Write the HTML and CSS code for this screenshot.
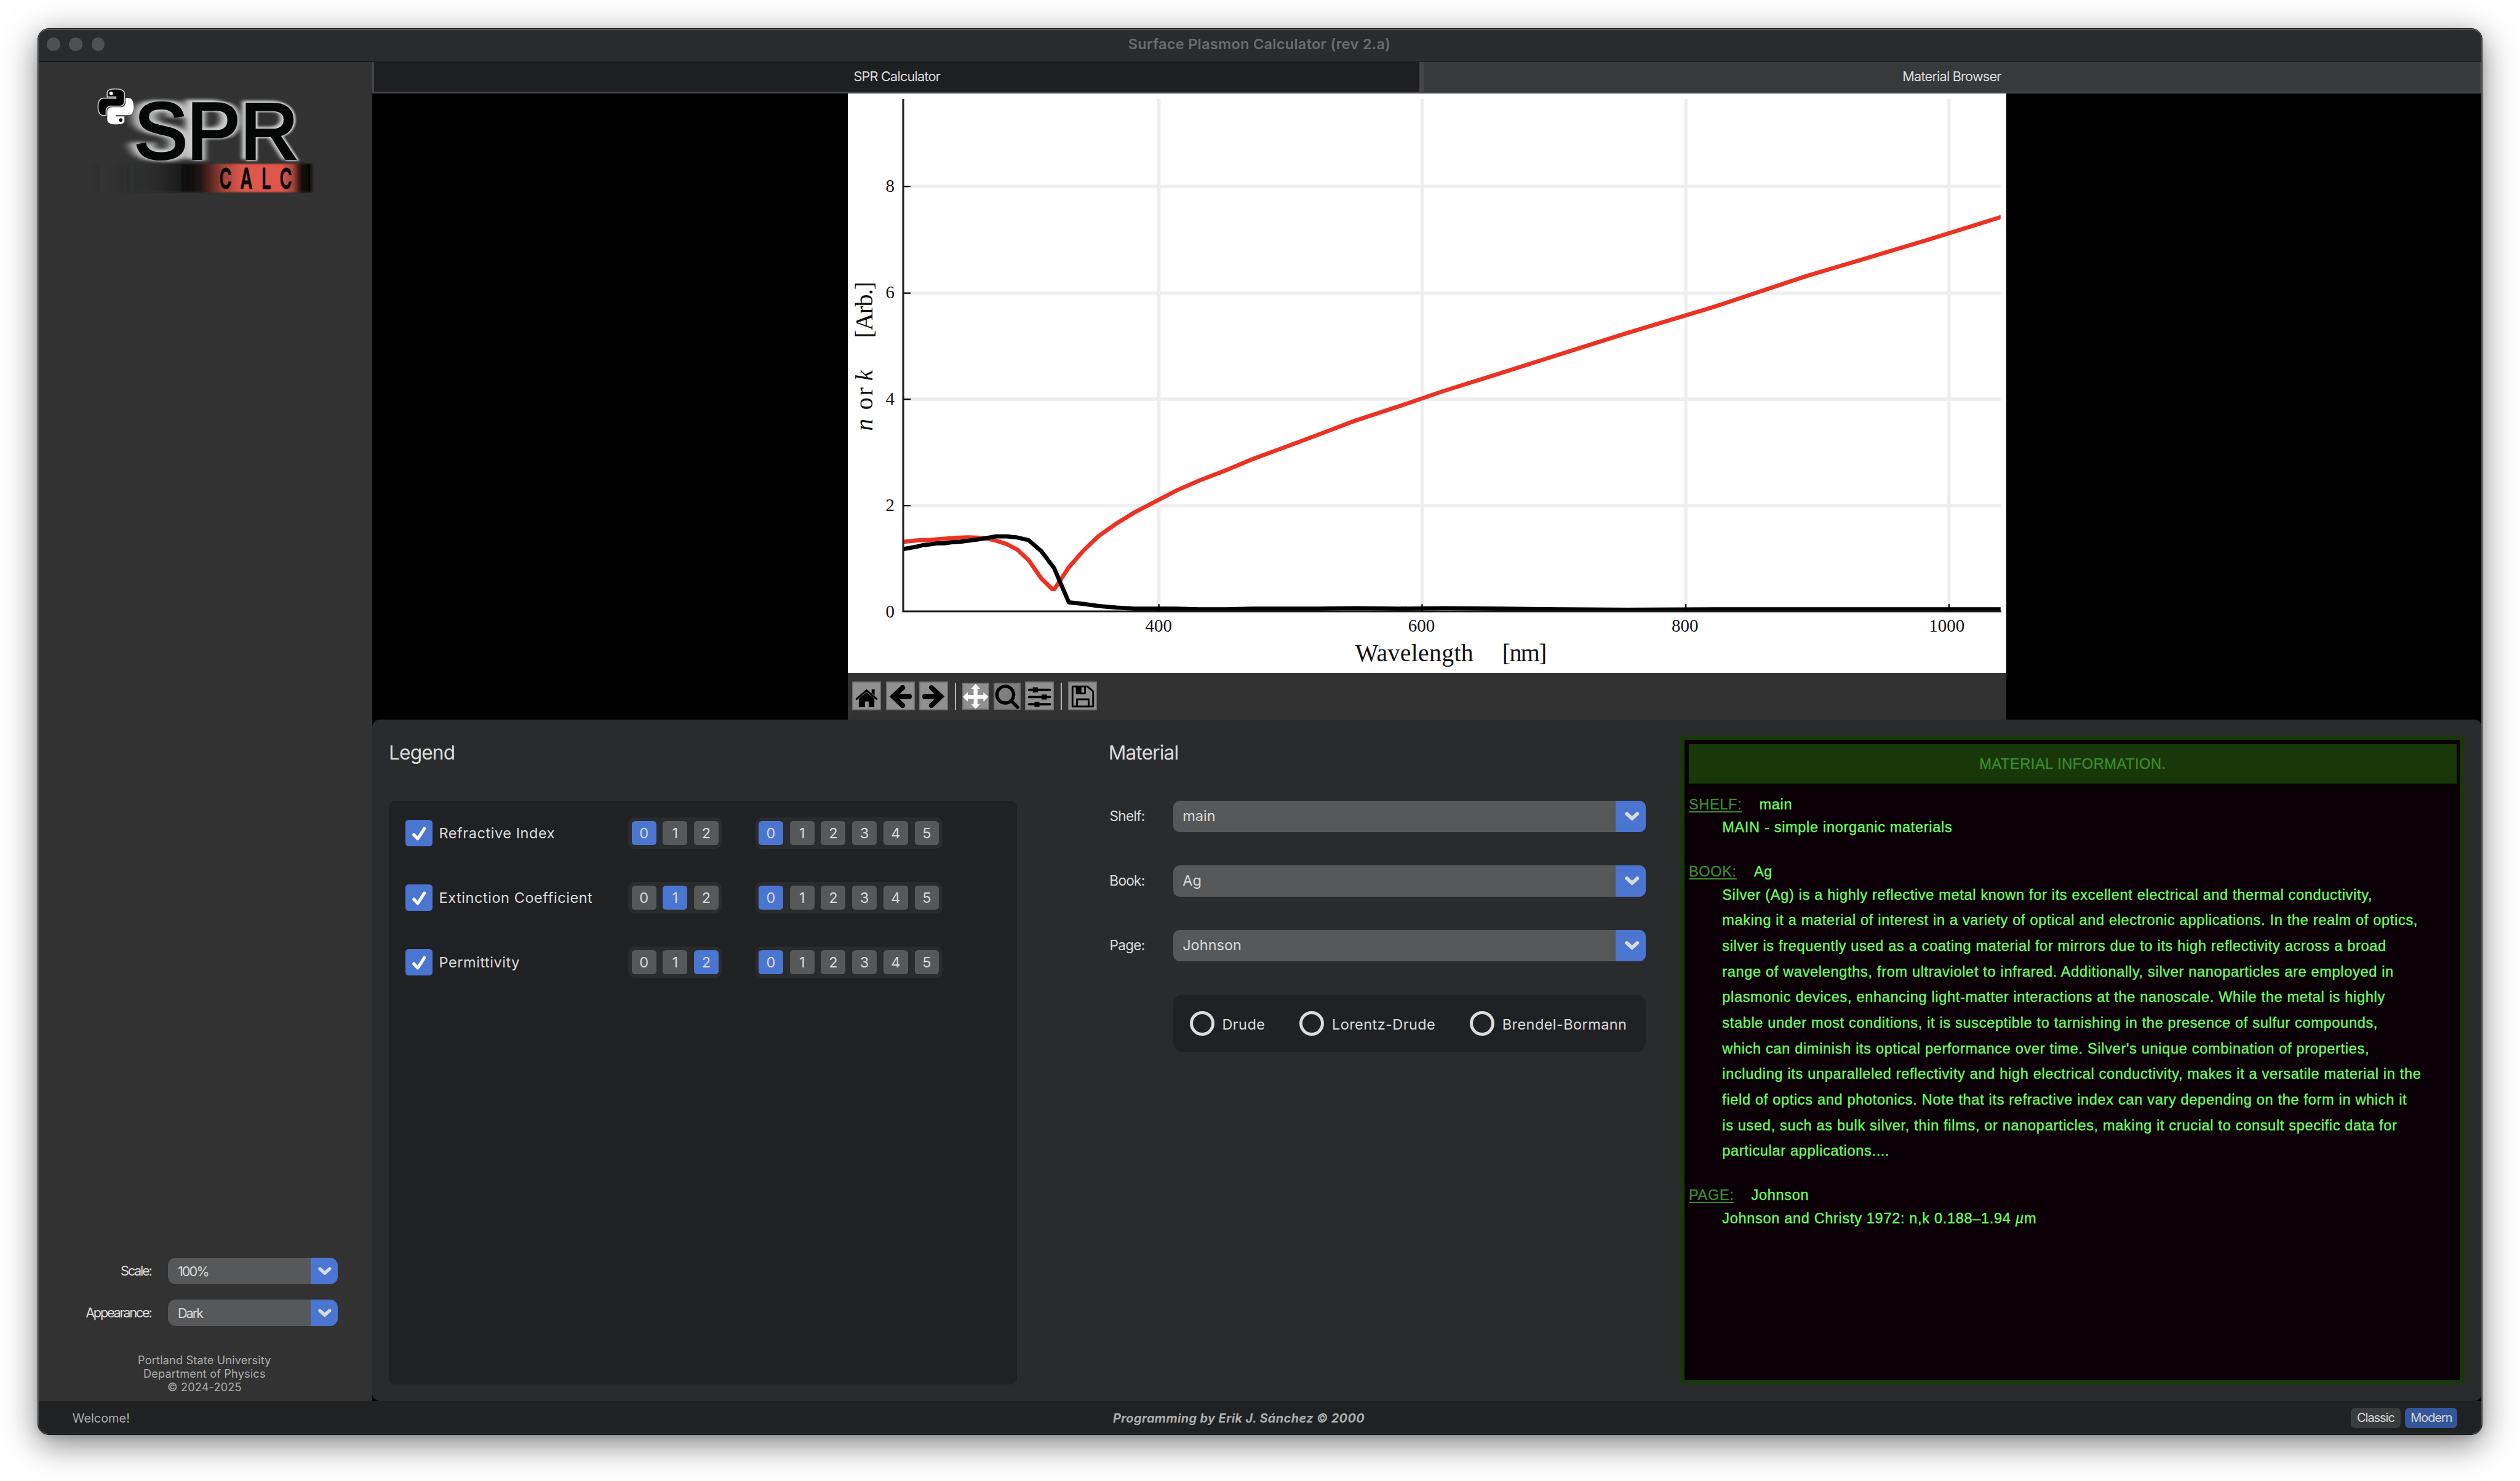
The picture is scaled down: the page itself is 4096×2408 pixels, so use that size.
FILE: index.html
```html
<!DOCTYPE html>
<html lang="en">
<head>
<meta charset="utf-8">
<title>Surface Plasmon Calculator</title>
<link rel="stylesheet" href="styles.css">
</head>
<body>
<svg width="0" height="0" class="defs">
  <defs>
    <symbol id="check" viewBox="0 0 48 48"><path d="M15 26.500l7 7.500L34 15.500" fill="none" stroke="#fff" stroke-width="5.500" stroke-linecap="round" stroke-linejoin="round"/></symbol>
    <symbol id="chevron" viewBox="0 0 26 16"><path d="M3.500 3.500l9.500 8.500 9.500-8.500" fill="none" stroke="#dadada" stroke-width="6.500" stroke-linecap="round" stroke-linejoin="miter"/></symbol>
  </defs>
</svg>
<div class="window">
  <header class="titlebar">
    <div class="lights"><i></i><i></i><i></i></div>
    <div class="title">Surface Plasmon Calculator (rev 2.a)</div>
  </header>

  <div class="content">
    <aside class="sidebar">
      <svg class="logo" viewBox="0 0 420 210">
        <defs>
          <linearGradient id="bar" x1="0" x2="1" y1="0" y2="0">
            <stop offset="0" stop-color="#323232" stop-opacity="0"/>
            <stop offset=".3" stop-color="#1e2020" stop-opacity=".5"/>
            <stop offset=".44" stop-color="#101010"/>
            <stop offset=".49" stop-color="#1e1312"/>
            <stop offset=".6" stop-color="#a8453b"/>
            <stop offset=".68" stop-color="#df574b"/>
            <stop offset=".85" stop-color="#df574b"/>
            <stop offset=".9" stop-color="#a8453b"/>
            <stop offset=".94" stop-color="#150a09"/>
            <stop offset=".975" stop-color="#050505"/>
            <stop offset="1" stop-color="#323232" stop-opacity="0"/>
          </linearGradient>
          <filter id="trail-s" x="-40%" y="-20%" width="180%" height="140%">
            <feGaussianBlur stdDeviation="9 3"/><feOffset dx="-10" dy="-1" result="far"/>
            <feGaussianBlur in="SourceGraphic" stdDeviation="9 3"/><feOffset dx="12" dy="0" result="near"/>
            <feMerge><feMergeNode in="far"/><feMergeNode in="near"/></feMerge>
          </filter>
          <filter id="trail-p" x="-40%" y="-20%" width="180%" height="140%">
            <feGaussianBlur stdDeviation="6 3"/><feOffset dx="-11" dy="-3" result="far"/>
            <feGaussianBlur in="SourceGraphic" stdDeviation="5 2"/><feOffset dx="4" result="near"/>
            <feMerge><feMergeNode in="far"/><feMergeNode in="near"/></feMerge>
          </filter>
          <filter id="trail-r" x="-40%" y="-20%" width="180%" height="140%">
            <feGaussianBlur stdDeviation="3.500 2.500"/><feOffset dx="-5" dy="-2" result="far"/>
            <feGaussianBlur in="SourceGraphic" stdDeviation="2"/><feOffset dx="2" result="near"/>
            <feMerge><feMergeNode in="far"/><feMergeNode in="near"/></feMerge>
          </filter>
          <filter id="edge" x="-5%" y="-20%" width="110%" height="140%"><feGaussianBlur stdDeviation="1.200"/></filter>
        </defs>
        <g class="glow">
          <text x="80.600" y="144.500" filter="url(#trail-s)">S</text>
          <text x="175.400" y="144.500" filter="url(#trail-p)">P</text>
          <text x="271.400" y="144.500" filter="url(#trail-r)">R</text>
        </g>
        <rect x="0" y="154" width="406" height="51" fill="url(#bar)" filter="url(#edge)"/>
        <g class="spr">
          <text x="80.600" y="144.500">S</text>
          <text x="175.400" y="144.500">P</text>
          <text x="271.400" y="144.500">R</text>
        </g>
        <g class="calc">
          <text transform="translate(244.700 199) scale(.58 1)">C</text>
          <text transform="translate(282 199) scale(.58 1)">A</text>
          <text transform="translate(318 199) scale(.58 1)">L</text>
          <text transform="translate(353 199) scale(.58 1)">C</text>
        </g>
        <g transform="translate(16 19.500) scale(2.650)">
          <path fill="#050505" stroke="#c8c8c8" stroke-width=".7" d="M14.25.18l.9.2.73.26.59.3.45.32.34.34.25.34.16.33.1.3.04.26.02.2-.01.13V8.5l-.05.63-.13.55-.21.46-.26.38-.3.31-.33.25-.35.19-.35.14-.33.1-.3.07-.26.04-.21.02H8.77l-.69.05-.59.14-.5.22-.41.27-.33.32-.27.35-.2.36-.15.37-.1.35-.07.32-.04.27-.02.21v3.06H3.17l-.21-.03-.28-.07-.32-.12-.35-.18-.36-.26-.36-.36-.35-.46-.32-.59-.28-.73-.21-.88-.14-1.05-.05-1.23.06-1.22.16-1.04.24-.87.32-.71.36-.57.4-.44.42-.33.42-.24.4-.16.36-.1.32-.05.24-.01h.16l.06.01h8.16v-.83H6.180l-.01-2.750-.02-.37.05-.34.11-.31.17-.28.25-.26.31-.23.38-.2.44-.18.51-.15.58-.12.64-.1.71-.06.77-.04.84-.02 1.27.05z"/>
          <circle cx="8.800" cy="3" r="1.200" fill="#fff"/>
          <path fill="#fff" d="M21.040 6.110l.28.06.32.12.35.18.36.27.36.35.35.47.32.59.28.73.21.88.14 1.04.05 1.23-.06 1.23-.16 1.04-.24.86-.32.71-.36.57-.4.45-.42.33-.42.24-.4.16-.36.09-.32.05-.24.02-.16-.01h-8.22v.82h5.840l.01 2.76.02.36-.05.34-.11.31-.17.29-.25.25-.31.24-.38.2-.44.17-.51.15-.58.13-.64.09-.71.07-.77.04-.84.01-1.27-.04-1.07-.14-.9-.2-.73-.25-.59-.3-.45-.33-.34-.34-.25-.34-.16-.33-.1-.3-.04-.25-.02-.2.01-.13v-5.340l.05-.64.13-.54.21-.46.26-.38.3-.32.33-.24.35-.2.35-.14.33-.1.3-.06.26-.04.21-.02.13-.01h5.840l.69-.05.59-.14.5-.21.41-.28.33-.32.27-.35.2-.36.15-.36.1-.35.07-.32.04-.28.02-.21V6.070h2.090l.14.01z"/>
          <circle cx="15.300" cy="21" r="1.200" fill="#050505"/>
        </g>
      </svg>

      <div class="settings">
        <label>Scale:</label>
        <div class="combo small"><span class="value">100%</span><span class="arrow"><svg><use href="#chevron"/></svg></span></div>
        <label>Appearance:</label>
        <div class="combo small"><span class="value">Dark</span><span class="arrow"><svg><use href="#chevron"/></svg></span></div>
      </div>
      <p class="credits">Portland State University<br>Department of Physics<br>© 2024-2025</p>
    </aside>

    <main class="main">
      <nav class="tabs">
        <div class="tab active">SPR Calculator</div>
        <div class="tab">Material Browser</div>
      </nav>

      <section class="figure">
        <svg class="plot" viewBox="0 0 2080 1040">
          <defs>
            <clipPath id="axes"><rect x="205.600" y="-1" width="833.800" height="11"/></clipPath>
          </defs>
          <g class="grid">
            <path d="M558.500 10V930M1031 10V930M1504.500 10V930M1977 10V930"/>
            <path d="M100 740.200H2070M100 549H2070M100 358.500H2070M100 167H2070"/>
          </g>
          <g transform="matrix(2.363 0 0 -95.400 -386.500 930)">
            <polyline class="series red" clip-path="url(#axes)" points="203.300,1.296 207.300,1.312 211.900,1.325 216.400,1.336 221.400,1.342 226.200,1.344 231.300,1.357 237.100,1.367 242.600,1.378 249,1.389 255.100,1.393 261.600,1.387 268.900,1.372 276.100,1.331 284.400,1.264 292.400,1.161 300.900,.964 310.700,.616 318.800,.420 320.600,.420 331.500,.829 342.500,1.142 354.200,1.419 367.900,1.657 381.500,1.864 397.400,2.070 413.300,2.275 430.500,2.462 450.900,2.657 471.400,2.869 495.900,3.093 520.900,3.324 548.600,3.586 582.100,3.858 616.800,4.152 659.500,4.483 704.500,4.838 756,5.242 821.100,5.727 892,6.312 984,6.992 1088,7.795"/>
            <polyline class="series" clip-path="url(#axes)" points="203.300,1.150 207.300,1.180 211.900,1.200 216.400,1.220 221.400,1.250 226.200,1.260 231.300,1.280 237.100,1.280 242.600,1.300 249,1.310 255.100,1.330 261.600,1.350 268.900,1.380 276.100,1.410 284.400,1.410 292.400,1.390 300.900,1.340 310.700,1.130 320.400,.810 331.500,.170 342.500,.140 354.200,.100 367.900,.070 381.500,.050 397.400,.050 413.300,.050 430.500,.040 450.900,.040 471.400,.050 495.900,.050 520.900,.050 548.600,.060 582.100,.050 616.800,.060 659.500,.050 704.500,.040 756,.030 821.100,.040 892,.040 984,.040 1088,.040"/>
          </g>
          <path class="axis" d="M99.500 10V930H2071"/>
          <path class="ticks" d="M100 740.200H113M100 549H113M100 358.500H113M100 167H113M558.500 930V917M1031 930V917M1504.500 930V917M1977 930V917"/>
          <g class="tick-label">
            <text x="84" y="941" text-anchor="end">0</text>
            <text x="84" y="750" text-anchor="end">2</text>
            <text x="84" y="559" text-anchor="end">4</text>
            <text x="84" y="368" text-anchor="end">6</text>
            <text x="84" y="177" text-anchor="end">8</text>
            <text x="558" y="966" text-anchor="middle">400</text>
            <text x="1030" y="966" text-anchor="middle">600</text>
            <text x="1503" y="966" text-anchor="middle">800</text>
            <text x="1973" y="966" text-anchor="middle">1000</text>
          </g>
          <g class="axis-label">
            <text x="911" y="1020" textLength="212">Wavelength</text>
            <text x="1175" y="1020" textLength="80">[nm]</text>
            <g transform="translate(44 606) rotate(-90)">
              <text x="0" y="0" font-style="italic">n</text>
              <text x="38" y="0" textLength="40">or</text>
              <text x="90" y="0" font-style="italic">k</text>
              <text x="167" y="0" textLength="101">[Arb.]</text>
            </g>
          </g>
        </svg>
        <div class="toolbar">
          <svg class="tool" viewBox="0 0 52 52"><path d="M8 31.500L26 16l18 15.500" fill="none" stroke="#000" stroke-width="3.500" stroke-linecap="round"/><path d="M35 14h5.500v11L35 20zM12 31l14-11.500L40 31v15H30V36h-7v10H12z"/></svg>
          <svg class="tool" viewBox="0 0 52 52"><path d="M30 11L13 27l17 16M13 27h29" fill="none" stroke="#000" stroke-width="9" stroke-linecap="round" stroke-linejoin="miter"/></svg>
          <svg class="tool" viewBox="0 0 52 52"><path d="M22 11l17 16-17 16M39 27H10" fill="none" stroke="#000" stroke-width="9" stroke-linecap="round" stroke-linejoin="miter"/></svg>
          <i class="sep"></i>
          <svg class="tool compact" viewBox="0 0 48 48"><path fill="#fff" d="M24 2l8 9h-4.500v11H38v-5l9 8.500-9 8.500v-5H27.500v10H32l-8 8-8-8h4.500V29H10v5l-9-8.500 9-8.500v5h10.500V11H16z"/></svg>
          <svg class="tool compact dim" viewBox="0 0 48 48"><circle cx="21" cy="21.500" r="15" fill="none" stroke="#000" stroke-width="6"/><path d="M32 33l11 11" stroke="#000" stroke-width="6" stroke-linecap="round"/></svg>
          <svg class="tool" viewBox="0 0 52 52"><path d="M7 15h38M7 28h38M7 41h38" stroke="#000" stroke-width="4" stroke-linecap="round"/><path d="M14 10.500h9v9h-9zM30 23.500h9v9h-9zM17 36.500h9v9h-9z"/></svg>
          <i class="sep"></i>
          <svg class="tool" viewBox="0 0 52 52"><path d="M8 9h27l10 9v27H8zM16 45V32h21v13" fill="none" stroke="#000" stroke-width="3.200" stroke-linejoin="round"/><path d="M14 10v11a2 2 0 0 0 2 2h14a2 2 0 0 0 2-2V10h-3v10h-5V10z"/></svg>
        </div>
      </section>

      <section class="controls">
        <div class="legend">
          <h2>Legend</h2>
          <div class="legend-card">
            <div class="legend-row">
              <svg class="checkbox"><use href="#check"/></svg><span class="name">Refractive Index</span>
              <div class="segments"><b class="on">0</b><b>1</b><b>2</b></div>
              <div class="segments"><b class="on">0</b><b>1</b><b>2</b><b>3</b><b>4</b><b>5</b></div>
            </div>
            <div class="legend-row">
              <svg class="checkbox"><use href="#check"/></svg><span class="name">Extinction Coefficient</span>
              <div class="segments"><b>0</b><b class="on">1</b><b>2</b></div>
              <div class="segments"><b class="on">0</b><b>1</b><b>2</b><b>3</b><b>4</b><b>5</b></div>
            </div>
            <div class="legend-row">
              <svg class="checkbox"><use href="#check"/></svg><span class="name">Permittivity</span>
              <div class="segments"><b>0</b><b>1</b><b class="on">2</b></div>
              <div class="segments"><b class="on">0</b><b>1</b><b>2</b><b>3</b><b>4</b><b>5</b></div>
            </div>
          </div>
        </div>

        <div class="material">
          <h2>Material</h2>
          <div class="fields">
            <label>Shelf:</label>
            <div class="combo"><span class="value">main</span><span class="arrow"><svg><use href="#chevron"/></svg></span></div>
            <label>Book:</label>
            <div class="combo"><span class="value">Ag</span><span class="arrow"><svg><use href="#chevron"/></svg></span></div>
            <label>Page:</label>
            <div class="combo"><span class="value">Johnson</span><span class="arrow"><svg><use href="#chevron"/></svg></span></div>
            <div class="radios">
              <span class="radio"><i></i><span>Drude</span></span>
              <span class="radio"><i></i><span>Lorentz-Drude</span></span>
              <span class="radio"><i></i><span>Brendel-Bormann</span></span>
            </div>
          </div>
        </div>

        <div class="info">
          <h3>MATERIAL INFORMATION.</h3>
          <div class="entry"><u>SHELF:</u><span>main</span></div>
          <p class="short">MAIN - simple inorganic materials</p>
          <div class="entry"><u>BOOK:</u><span>Ag</span></div>
          <p class="long">Silver (Ag) is a highly reflective metal known for its excellent electrical and thermal conductivity,<br>making it a material of interest in a variety of optical and electronic applications. In the realm of optics,<br>silver is frequently used as a coating material for mirrors due to its high reflectivity across a broad<br>range of wavelengths, from ultraviolet to infrared. Additionally, silver nanoparticles are employed in<br>plasmonic devices, enhancing light-matter interactions at the nanoscale. While the metal is highly<br>stable under most conditions, it is susceptible to tarnishing in the presence of sulfur compounds,<br>which can diminish its optical performance over time. Silver's unique combination of properties,<br>including its unparalleled reflectivity and high electrical conductivity, makes it a versatile material in the<br>field of optics and photonics. Note that its refractive index can vary depending on the form in which it<br>is used, such as bulk silver, thin films, or nanoparticles, making it crucial to consult specific data for<br>particular applications....</p>
          <div class="entry"><u>PAGE:</u><span>Johnson</span></div>
          <p class="short">Johnson and Christy 1972: n,k 0.188–1.94 <em>µ</em>m</p>
        </div>
      </section>
    </main>
  </div>

  <footer class="statusbar">
    <div class="status">Welcome!</div>
    <div class="author">Programming by Erik J. Sánchez © 2000</div>
    <div class="modes"><span class="mode">Classic</span><span class="mode on">Modern</span></div>
  </footer>
</div>
</body>
</html>
```
FILE: styles.css
```css
/* 0.01rem is one design pixel */
html { font-size: 90.539px; }
* { box-sizing: border-box; margin: 0; padding: 0; }
body {
  width: 100vw; height: 100vh; overflow: hidden; background: #fff;
  padding: .51rem 0 0 .67rem;
  font-family: Inter, "Liberation Sans", sans-serif; color: #dcdcdc;
}
.defs { display: block; width: 0; height: 0; position: absolute; }
.window {
  position: relative; display: flex; flex-direction: column;
  width: 43.9rem; height: 25.26rem; overflow: visible;
  border: .01rem solid #0c0c0c; border-radius: .2rem; background: #202123;
  box-shadow: 0 .16rem .6rem rgba(0, 0, 0, .5), 0 .04rem .12rem rgba(0, 0, 0, .1);
}
.window::after {
  content: ""; position: absolute; inset: 0; border-radius: .19rem;
  border: .02rem solid #535456; border-top-color: #77797a; pointer-events: none;
}
.titlebar {
  position: relative; height: .58rem; flex: none; background: #2a2b2d;
  border-bottom: .015rem solid #000; border-radius: .19rem .19rem 0 0;
  display: flex; align-items: center; padding: 0 .16rem .02rem;
}
.lights { display: flex; gap: .16rem; width: 3rem; }
.lights i { width: .24rem; height: .24rem; border-radius: 50%; background: #4f5052; }
.title { flex: 1; text-align: center; margin-right: 3.02rem; font-size: .26rem; line-height: .3rem; font-weight: 600; color: #6b6c6d; padding-bottom: .02rem; letter-spacing: .003rem; }

.content { display: flex; height: 24.06rem; flex: none; }
.sidebar { width: 6rem; flex: none; background: #323232; display: flex; flex-direction: column; padding: .3rem 0 0 .92rem; }
.logo { width: 4.2rem; height: 2.1rem; display: block; overflow: visible; }
.spr, .glow { font-family: "Liberation Sans", sans-serif; font-size: 144px; fill: #050706; stroke: #050706; stroke-width: 4.500px; }
.glow { fill: #cfcfcf; stroke: #cfcfcf; stroke-width: 7px; }
.calc { font-family: Inter, sans-serif; font-weight: 600; font-size: 52px; text-anchor: middle; fill: #050505; stroke: #050505; stroke-width: 1px; }
.settings {
  display: grid; grid-template-columns: 1.11rem 3.04rem; column-gap: .31rem; row-gap: .26rem;
  margin: auto 0 0 0; align-items: center; font-size: .24rem;
}
.settings label { display: flex; justify-content: flex-end; line-height: .48rem; padding-top: .01rem; white-space: nowrap; letter-spacing: -.025rem; }
.credits { width: 4.14rem; text-align: center; color: #adadad; font-size: .2rem; line-height: .24rem; margin: .49rem 0 .13rem; letter-spacing: .002rem; }

.combo { display: flex; height: .56rem; border-radius: .12rem; overflow: hidden; background: #575859; }
.combo .value { flex: 1; line-height: .56rem; padding-left: .17rem; font-size: .26rem; color: #dadada; }
.combo .arrow { width: .54rem; background: #4a76d2; display: flex; align-items: center; justify-content: center; }
.combo .arrow svg { width: .26rem; height: .16rem; margin-left: .06rem; }
.combo.small { height: .48rem; border-radius: .14rem; }
.combo.small .value { line-height: .49rem; font-size: .24rem; letter-spacing: -.022rem; }
.combo.small .arrow { width: .48rem; }
.combo.small .arrow svg { width: .24rem; height: .15rem; margin-left: .02rem; }

.main { flex: 1; display: flex; flex-direction: column; background: #000; }
.tabs { height: .58rem; display: flex; gap: .08rem; padding: .02rem .04rem .04rem; background: #464649; }
.tab { flex: 1; background: #38393b; text-align: center; font-size: .24rem; line-height: .52rem; letter-spacing: -.009rem; }
.tab.active { flex: none; width: 18.76rem; background: #1e1f21; }
.figure { height: 11.24rem; display: flex; flex-direction: column; align-items: center; }
.plot { width: 20.8rem; height: 10.4rem; background: #fff; display: block; }
.grid path { stroke: #eee; stroke-width: 6px; fill: none; }
.series { fill: none; stroke: #000; stroke-width: .075rem; stroke-linejoin: round; vector-effect: non-scaling-stroke; }
.series.red { stroke: #ec3323; }
.axis { fill: none; stroke: #1c1c1c; stroke-width: 3.500px; }
.ticks { stroke: #000; stroke-width: 2.500px; }
.tick-label { font: 32px "Liberation Serif", serif; fill: #111; }
.axis-label { font: 44px "Liberation Serif", serif; fill: #111; }
.toolbar { width: 20.8rem; height: .84rem; background: #323232; display: flex; align-items: center; gap: .08rem; padding-left: .08rem; }
.tool { width: .52rem; height: .52rem; background: #909090; box-shadow: inset 0 0 0 .02rem #6f6f6f; }
.tool.compact { width: .48rem; height: .48rem; }
.tool.dim { background: #7e7e7e; }
.sep { width: .02rem; height: .48rem; background: #b4b4b4; margin: 0 .04rem; }

.controls { height: 12.24rem; background: #2a2b2d; border-radius: .14rem; display: flex; padding: .29rem .32rem .3rem .3rem; }
h2 { font-weight: 400; font-size: .35rem; line-height: .5rem; margin: .05rem 0 .62rem; letter-spacing: -.0095rem; }
.legend { width: 11.28rem; display: flex; flex-direction: column; }
.legend-card { flex: 1; background: #202123; border-radius: .12rem; padding: .3rem; display: flex; flex-direction: column; gap: .6rem; }
.legend-row { display: flex; align-items: center; height: .56rem; }
.checkbox { width: .48rem; height: .48rem; border-radius: .06rem; background: #4a76d2; }
.name { width: 3.4rem; margin-left: .12rem; font-size: .26rem; letter-spacing: .006rem; }
.segments { display: flex; gap: .12rem; padding: .06rem; background: #2a2b2d; border-radius: .12rem; margin-right: .6rem; }
.segments b { width: .44rem; height: .44rem; border-radius: .06rem; background: #575859; font-weight: 400; font-size: .26rem; line-height: .44rem; text-align: center; color: #dadada; }
.segments .on { background: #4a76d2; }

.material { width: 9.64rem; margin-left: 1.64rem; }
.fields { display: grid; grid-template-columns: 1.16rem 8.48rem; row-gap: .6rem; font-size: .26rem; line-height: .56rem; }
.fields label { width: .65rem; display: flex; justify-content: flex-end; font-size: .25rem; white-space: nowrap; letter-spacing: -.008rem; }
.radios { grid-column: 2; height: 1.04rem; border-radius: .18rem; background: #202123; display: flex; align-items: center; padding-left: .3rem; gap: .62rem; letter-spacing: .0045rem; }
.radio { display: flex; align-items: center; gap: .14rem; }
.radio i { width: .44rem; height: .44rem; border: .06rem solid #dcdcdc; border-radius: 50%; }
.radio span { padding-top: .04rem; white-space: nowrap; }

.info {
  width: 14.08rem; margin-left: .62rem; background: #0a0006; border: .08rem solid #18380a; border-radius: .04rem;
  padding: .08rem .06rem 0 .08rem; font-family: "Liberation Sans", sans-serif; font-size: .26rem; letter-spacing: .0075rem; color: #6bff5c;
  -webkit-text-stroke: .004rem currentColor;
}
.info h3 { height: .7rem; line-height: .72rem; background: #18380a; color: #3b8d2b; font-weight: 400; font-size: .26rem; text-align: center; margin-bottom: .18rem; letter-spacing: .0065rem; }
.entry { display: flex; gap: .31rem; line-height: .41rem; height: .41rem; }
.entry u { color: #3b8d2b; text-underline-offset: .03rem; text-decoration-thickness: .02rem; }
.info p { padding-left: .6rem; white-space: nowrap; }
.short { line-height: .41rem; margin-bottom: .38rem; }
.long { line-height: .46rem; margin: -.01rem 0 .36rem; }

.statusbar { flex: 1; display: grid; grid-template-columns: 18.68rem auto 1fr; align-items: center; padding: .01rem .44rem 0 .62rem; font-size: .22rem; color: #adadad; }
.author { font-weight: 700; font-style: italic; letter-spacing: .0042rem; white-space: nowrap; }
.modes { display: flex; justify-content: flex-end; gap: .08rem; letter-spacing: -.011rem; }
.mode { width: .9rem; height: .36rem; line-height: .36rem; border-radius: .08rem; background: #3b3c3e; color: #dadada; text-align: center; }
.mode.on { width: .94rem; background: #34569b; }
```
